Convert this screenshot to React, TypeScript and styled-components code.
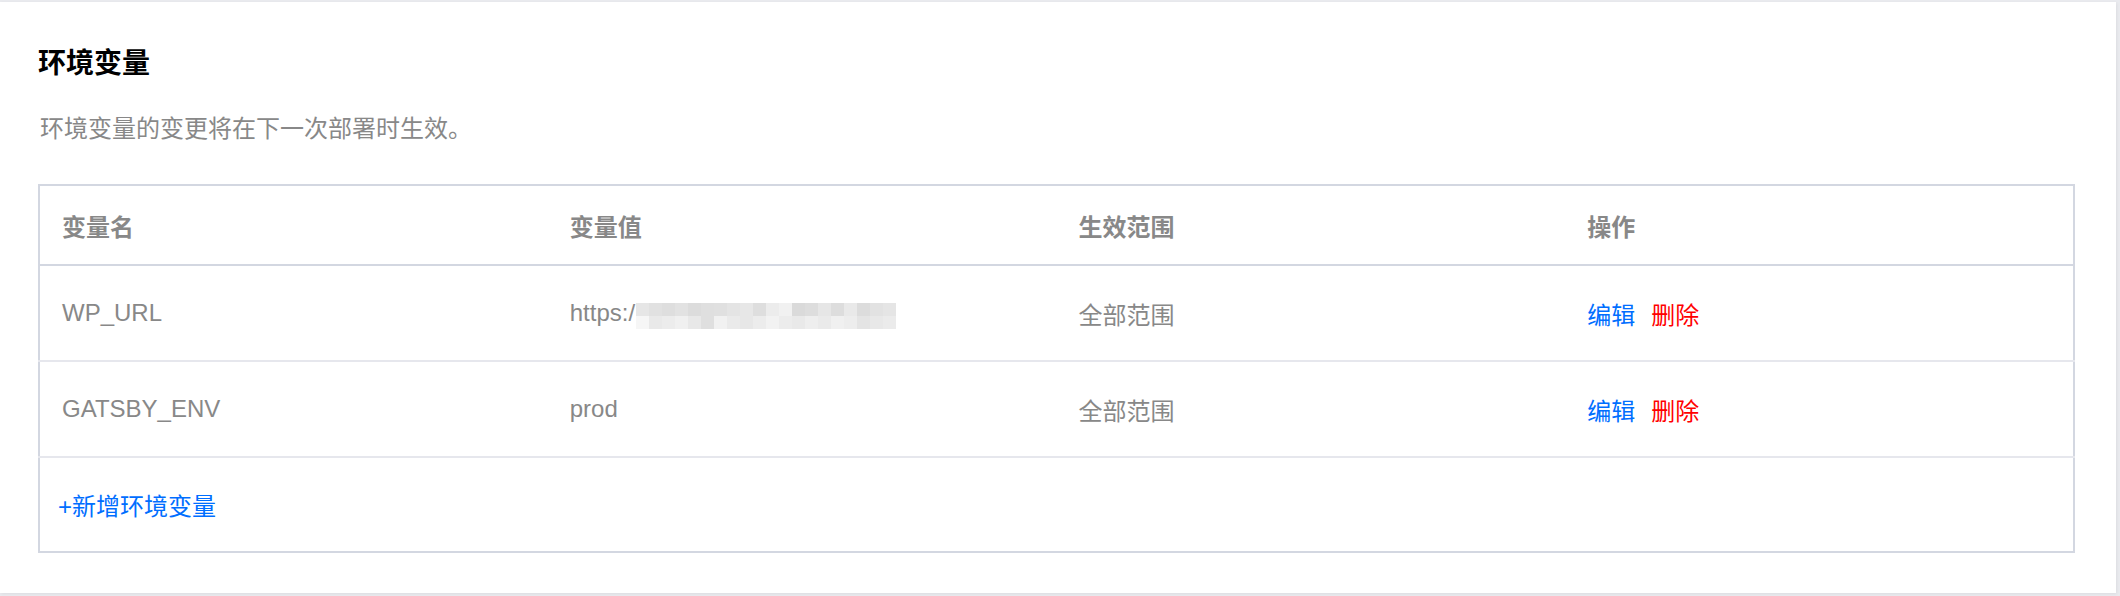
import React from 'react';
import styled, { createGlobalStyle } from 'styled-components';

const GlobalStyle = createGlobalStyle`
    html, body {
        margin: 0;
        padding: 0;
        background: #e9eaee;
    }

    body {
        font-family: "Liberation Sans", "Noto Sans CJK SC", sans-serif;
    }
`;

interface IVariable
{
    name : string;
    value : string;
    blurred ?: boolean;
    scope : string;
}

const variables : IVariable[] = [
    { name: 'WP_URL', value: 'https:/', blurred: true, scope: '全部范围' },
    { name: 'GATSBY_ENV', value: 'prod', scope: '全部范围' },
];

// greys of the pixelated (hidden) part of the url, two rows of blocks
const blurTop = [
    '#e6e6e6', '#e1e1e1', '#dedede', '#e2e2e2', '#dcdcdc', '#dfdfdf', '#e0e0e0', '#e4e4e4',
    '#e7e7e7', '#dedede', '#ececec', '#f1f1f1', '#dadada', '#dddddd', '#e6e6e6', '#dddddd',
    '#e9e9e9', '#dcdcdc', '#e2e2e2', '#e5e5e5',
];
const blurBottom = [
    '#f6f6f6', '#e9e9e9', '#ececec', '#f0f0f0', '#e8e8e8', '#dfdfdf', '#f1f1f1', '#eaeaea',
    '#e7e7e7', '#ececec', '#f2f2f2', '#ececec', '#e9e9e9', '#eeeeee', '#eaeaea', '#f0f0f0',
    '#ededed', '#e4e4e4', '#e8e8e8', '#ebebeb',
];

const Page = styled.div`
    padding: 2px 4px 3px 0;
`;

const Card = styled.section`
    background: #fff;
    box-shadow: 1px 1px 3px rgba(0, 0, 0, 0.06);
    padding: 42px 41px 40px 38px;
`;

const Title = styled.h2`
    margin: 0;
    font-size: 28px;
    line-height: 40px;
    font-weight: 700;
    color: #000;
`;

const Hint = styled.p`
    margin: 27px 0 0 2px;
    font-size: 24px;
    line-height: 36px;
    color: #888;
`;

const Table = styled.table`
    margin-top: 37px;
    width: 100%;
    table-layout: fixed;
    border-collapse: collapse;
    border: 2px solid #d3d7e1;
    font-size: 24px;
    color: #888;

    th, td {
        text-align: left;
        padding: 0 0 0 22px;
    }

    th {
        height: 78px;
        font-weight: 600;
        border-bottom: 2px solid #d3d7e1;
    }

    td {
        height: 94px;
        font-weight: 400;
    }

    tbody tr + tr td {
        border-top: 2px solid #e6e7ed;
    }
`;

const AddCell = styled.td`
    && {
        height: 93px;
    }
`;

const Value = styled.span`
    display: inline-flex;
    align-items: center;
`;

const Pixels = styled.span`
    display: inline-grid;
    grid-template-columns: repeat(20, 13px);
    grid-auto-rows: 13px;
    margin: 6px 0 0 1px;
`;

const Pixel = styled.span<{ $c : string }>`
    background: ${p => p.$c};
`;

const Link = styled.a<{ $danger ?: boolean }>`
    color: ${p => p.$danger ? '#ff0000' : '#006eff'};
    text-decoration: none;
    cursor: pointer;

    & + & {
        margin-left: 16px;
    }
`;

const AddLink = styled(Link)`
    margin-left: -4px;
`;

export default function App()
{
    return (
        <Page>
            <GlobalStyle />
            <Card>
                <Title>环境变量</Title>
                <Hint>环境变量的变更将在下一次部署时生效。</Hint>
                <Table>
                    <thead>
                        <tr>
                            <th>变量名</th>
                            <th>变量值</th>
                            <th>生效范围</th>
                            <th>操作</th>
                        </tr>
                    </thead>
                    <tbody>
                        {variables.map(v => (
                            <tr key={v.name}>
                                <td>{v.name}</td>
                                <td>
                                    <Value>
                                        {v.value}
                                        {v.blurred && (
                                            <Pixels>
                                                {blurTop.concat(blurBottom).map((c, i) => (
                                                    <Pixel key={i} $c={c} />
                                                ))}
                                            </Pixels>
                                        )}
                                    </Value>
                                </td>
                                <td>{v.scope}</td>
                                <td>
                                    <Link>编辑</Link>
                                    <Link $danger>删除</Link>
                                </td>
                            </tr>
                        ))}
                        <tr>
                            <AddCell colSpan={4}>
                                <AddLink>+新增环境变量</AddLink>
                            </AddCell>
                        </tr>
                    </tbody>
                </Table>
            </Card>
        </Page>
    );
}
